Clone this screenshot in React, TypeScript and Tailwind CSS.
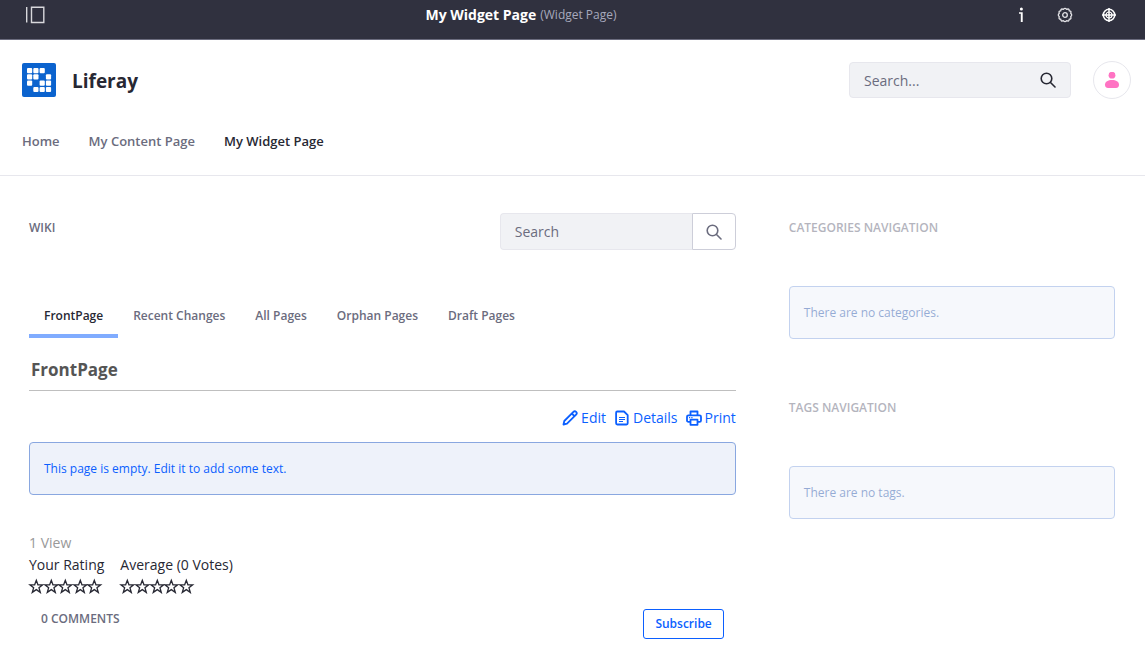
import { useState } from "react";
import type { ReactNode } from "react";

const STAR = "M8 1.2 9.8 6.1 15 6.2 10.9 9.4 12.4 14.4 8 11.4 3.6 14.4 5.1 9.4 1 6.2 6.2 6.1Z";

function ProductMenuIcon() {
  return (
    <svg className="block h-[18px] w-5" viewBox="0 0 20 18" fill="none" stroke="#d8d8dc" strokeWidth="1.4" aria-hidden="true">
      <path d="M1.7 1v15.500M6.500 1.200h12.300v15.300H6.500z" />
    </svg>
  );
}

function InfoIcon() {
  return (
    <svg className="block size-4" viewBox="0 0 16 16" fill="#fff" aria-hidden="true">
      <circle cx="8.400" cy="1.900" r="1.500" />
      <path d="M6 5.200h3.700V15H7.800V6.700H6z" />
    </svg>
  );
}

function CogIcon() {
  return (
    <svg className="block size-4" viewBox="0 0 16 16" fill="none" stroke="#e4e4e8" strokeWidth="1.300" strokeLinejoin="round" aria-hidden="true">
      <path d="M6.300 2.300Q8 .3 9.700 2.300 12.200 1.300 12.200 3.800 14.700 3.800 13.700 6.300 15.700 8 13.700 9.700 14.700 12.200 12.200 12.200 12.200 14.700 9.700 13.700 8 15.700 6.300 13.700 3.800 14.700 3.800 12.200 1.300 12.200 2.300 9.700.3 8 2.300 6.300 1.300 3.800 3.800 3.800 3.800 1.300 6.300 2.300Z" />
      <circle cx="8" cy="8" r="2.300" />
    </svg>
  );
}

function TargetIcon() {
  return (
    <svg className="block size-4" viewBox="0 0 16 16" fill="none" stroke="#fff" aria-hidden="true">
      <circle cx="8" cy="8" r="5.700" strokeWidth="1.600" />
      <circle cx="8" cy="8" r="3" strokeWidth="1.200" />
      <path d="M8 1v14M1 8h14" strokeWidth="1.500" />
    </svg>
  );
}

function SearchIcon() {
  return (
    <svg className="block size-4" viewBox="0 0 16 16" fill="none" stroke="currentColor" strokeWidth="1.600" strokeLinecap="round" aria-hidden="true">
      <circle cx="6.500" cy="6.500" r="5.300" />
      <path d="m10.500 10.500 4.500 4.500" />
    </svg>
  );
}

function UserIcon() {
  return (
    <svg className="block size-4" viewBox="0 0 16 16" fill="#ff73c3" aria-hidden="true">
      <circle cx="8" cy="3.200" r="3.400" />
      <path d="M1 12.400C1.200 9.600 4 8 8 8s6.800 1.600 7 4.400c.1 2.200-1 3.200-3 3.500H4c-2-.3-3.100-1.300-3-3.500Z" />
    </svg>
  );
}

function PencilIcon() {
  return (
    <svg className="block size-4" viewBox="0 0 16 16" fill="none" stroke="currentColor" strokeWidth="1.800" strokeLinejoin="round" aria-hidden="true">
      <path d="M1.500 14.500 2.300 11 11.400 1.900a1.900 1.900 0 0 1 2.700 2.700L5 13.700ZM9.800 3.500l2.700 2.700" />
    </svg>
  );
}

function DocumentIcon() {
  return (
    <svg className="block size-4" viewBox="0 0 16 16" fill="none" stroke="currentColor" strokeLinejoin="round" aria-hidden="true">
      <path d="M3.300 1.500H10l3.700 3.700v8.100a1.200 1.200 0 0 1-1.200 1.200H3.300a1.200 1.200 0 0 1-1.200-1.200V2.700a1.200 1.200 0 0 1 1.200-1.200Z" strokeWidth="1.800" />
      <path d="M5 7.500h6M5 9.500h6M5 11.500h4" strokeWidth="1" />
    </svg>
  );
}

function PrintIcon() {
  return (
    <svg className="block size-4" viewBox="0 0 16 16" fill="none" stroke="currentColor" strokeLinejoin="round" aria-hidden="true">
      <path d="M4.500 5V1.500h7V5M4 11.800H2.400A1.400 1.400 0 0 1 1 10.400V6.800a1.400 1.400 0 0 1 1.400-1.400h11.200A1.400 1.400 0 0 1 15 6.800v3.600a1.400 1.400 0 0 1-1.400 1.400H12M4.500 9.700h7v5.100h-7z" strokeWidth="1.800" />
      <path d="M3 7.700h1.200M5.300 7.700h1.200" strokeWidth="1.200" />
    </svg>
  );
}

function LogoIcon() {
  const rows = ["1110", "1101", "1011", "0111"];
  return (
    <svg className="block size-[34px]" viewBox="0 0 34 34" aria-hidden="true">
      <rect width="34" height="34" rx="2" fill="#0b63ce" />
      {rows.map((row, y) =>
        row.split("").map((cell, x) =>
          cell === "1" ? (
            <rect key={`${x}-${y}`} x={5 + x * 6.3} y={5 + y * 6.3} width="5.2" height="5.2" rx="1" fill="#fff" />
          ) : null,
        ),
      )}
    </svg>
  );
}

function StarIcon() {
  return (
    <svg className="block h-[15px] w-full overflow-visible" viewBox="0 0 16 16" fill="none" stroke="#272833" strokeWidth="1.400" strokeLinejoin="miter" aria-hidden="true">
      <path d={STAR} />
    </svg>
  );
}

const pages = ["Home", "My Content Page", "My Widget Page"];
const tabs = ["FrontPage", "Recent Changes", "All Pages", "Orphan Pages", "Draft Pages"];

function SideNavigation({ title, message }: { title: string; message: string }) {
  return (
    <section className="opacity-50">
      <h2 className="pt-[5px] text-[12px] leading-5 font-semibold text-[#6b6c7e] uppercase">{title}</h2>
      <p className="mt-12 flex h-[53px] items-center rounded border border-[#89a7e0] bg-[#eef2fa] px-[14px] text-[12px] text-[#2e5aac]">
        {message}
      </p>
    </section>
  );
}

function WikiAction({ icon, label }: { icon: ReactNode; label: string }) {
  return (
    <a href="#" className="flex items-center gap-[3px]">
      {icon}
      {label}
    </a>
  );
}

export default function App() {
  const [tab, setTab] = useState("FrontPage");

  return (
    <div className="bg-white font-['Open_Sans','Noto_Sans',sans-serif] text-[14px] leading-5 text-[#272833]">
      <div className="grid h-10 grid-cols-[1fr_auto_1fr] items-center border-b border-[#6b6c7e] bg-[#30313f] pr-7 pb-[9px] pl-[25px]">
        <button type="button" aria-label="Product menu" className="justify-self-start">
          <ProductMenuIcon />
        </button>
        <div className="flex items-center gap-1 pr-[100px]">
          <span className="font-bold text-white">My Widget Page</span>
          <span className="text-[12px] text-[#a7a9bc]">(Widget Page)</span>
        </div>
        <div className="flex items-center gap-7 justify-self-end">
          <button type="button" aria-label="Information"><InfoIcon /></button>
          <button type="button" aria-label="Configure page"><CogIcon /></button>
          <button type="button" aria-label="Simulation"><TargetIcon /></button>
        </div>
      </div>

      <header className="border-b border-[#e7e7ed] pt-[21px] pr-[14px] pb-6 pl-[22px]">
        <div className="flex h-[38px] items-center">
          <a href="#" className="flex items-center gap-4 text-[19px] font-bold">
            <LogoIcon />
            <span className="pt-[2px]">Liferay</span>
          </a>
          <form className="ml-auto flex h-9 w-[222px] items-center rounded border border-[#e7e7ed] bg-[#f1f2f5] pr-[14px] pl-[14px]" onSubmit={(e) => e.preventDefault()}>
            <input aria-label="Search" placeholder="Search..." className="min-w-0 flex-1 bg-transparent pt-[2px] outline-none placeholder:text-[#6b6c7e]" />
            <button type="submit" aria-label="Submit search"><SearchIcon /></button>
          </form>
          <button type="button" aria-label="User profile" className="ml-[22px] flex size-[38px] items-center justify-center rounded-full border border-[#e7e7ed]">
            <UserIcon />
          </button>
        </div>
        <nav className="mt-8 flex gap-[29px] text-[13px] font-semibold text-[#6b6c7e]">
          {pages.map((page) => (
            <a key={page} href="#" className={page === "My Widget Page" ? "text-[#272833]" : ""}>{page}</a>
          ))}
        </nav>
      </header>

      <main className="grid grid-cols-[13fr_6fr] gap-[53px] pt-[37px] pr-[30px] pl-[29px]">
        <section>
          <div className="flex h-9 items-start justify-between">
            <h2 className="pt-[5px] text-[12px] leading-5 font-semibold text-[#6b6c7e] uppercase">Wiki</h2>
            <form className="flex h-[37px] w-[236px]" onSubmit={(e) => e.preventDefault()}>
              <input aria-label="Search wiki" placeholder="Search" className="min-w-0 flex-1 rounded-l border border-r-0 border-[#e7e7ed] bg-[#f1f2f5] px-[14px] outline-none placeholder:text-[#6b6c7e]" />
              <button type="submit" aria-label="Submit wiki search" className="flex w-11 items-center justify-center rounded-r border border-[#cdced9] text-[#6b6c7e]">
                <SearchIcon />
              </button>
            </form>
          </div>

          <div role="tablist" className="mt-[45px] flex h-11 text-[12px] font-semibold text-[#6b6c7e]">
            {tabs.map((name) => (
              <button
                key={name}
                type="button"
                role="tab"
                aria-selected={tab === name}
                onClick={() => setTab(name)}
                className={tab === name ? "border-b-4 border-[#80acff] px-[15px] pt-1 text-[#272833]" : "border-b-4 border-transparent px-[15px] pt-1"}
              >
                {name}
              </button>
            ))}
          </div>

          <h1 className="mt-5 border-b border-[#bfbfbf] px-[2px] pb-2 text-[17px] leading-6 font-bold text-[#555]">FrontPage</h1>

          <div className="mt-[17px] flex justify-end gap-2 text-[#0b5fff]">
            <WikiAction icon={<PencilIcon />} label="Edit" />
            <WikiAction icon={<DocumentIcon />} label="Details" />
            <WikiAction icon={<PrintIcon />} label="Print" />
          </div>

          <a href="#" className="mt-[14px] flex h-[53px] items-center rounded border border-[#89a7e0] bg-[#eef2fa] px-[14px] text-[12px] text-[#0b5fff]">
            This page is empty. Edit it to add some text.
          </a>

          <p className="mt-[38px] text-[#999]">1 View</p>
          <div className="mt-[2px] flex gap-4">
            <div>
              <p>Your Rating</p>
              <div className="mt-1 flex w-[73px]">
                {[1, 2, 3, 4, 5].map((n) => (
                  <button key={n} type="button" aria-label={`Rate ${n} out of 5`} className="flex-1"><StarIcon /></button>
                ))}
              </div>
            </div>
            <div>
              <p>Average (0 Votes)</p>
              <div className="mt-1 flex w-[73px]">
                {[1, 2, 3, 4, 5].map((n) => (
                  <span key={n} className="flex-1"><StarIcon /></span>
                ))}
              </div>
            </div>
          </div>

          <div className="mt-[15px] flex items-start justify-between px-3">
            <h3 className="text-[12px] leading-5 font-semibold text-[#6b6c7e] uppercase">0 Comments</h3>
            <button type="button" className="h-[30px] rounded-[3px] border border-[#0b5fff] px-[11px] text-[12px] font-semibold text-[#0b5fff]">Subscribe</button>
          </div>
        </section>

        <aside className="flex flex-col gap-[54px]">
          <SideNavigation title="Categories Navigation" message="There are no categories." />
          <SideNavigation title="Tags Navigation" message="There are no tags." />
        </aside>
      </main>
    </div>
  );
}
